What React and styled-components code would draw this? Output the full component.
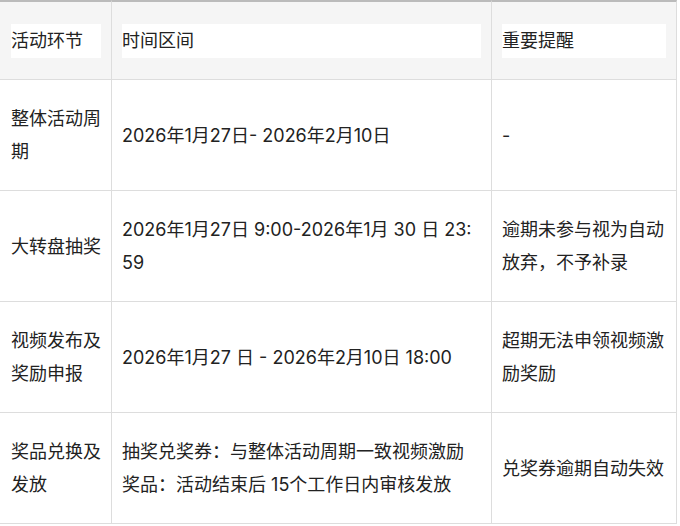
import React from "react";
import styled, { createGlobalStyle } from "styled-components";

const Global = createGlobalStyle`
  html, body { margin: 0; padding: 0; background: #fff; }
  body { font-family: Inter, "Noto Sans CJK SC", sans-serif; color: #222; }
`;

const Table = styled.table`
  border-collapse: separate;
  border-spacing: 0;
  table-layout: fixed;
  width: 677px;
  font-size: 18px;
  line-height: 33px;
`;

const HeadCell = styled.th`
  background: #f5f5f5;
  border-top: 2px solid #bbbbbb;
  border-right: 1px solid #dddddd;
  border-bottom: 1px solid #dddddd;
  padding: 22px 10px 21px ${(p) => (p.$first ? "11px" : "10px")};
  text-align: left;
  font-weight: normal;
  vertical-align: middle;
`;

const HeadLabel = styled.p`
  margin: 0;
  background: #fff;
  height: 34px;
  line-height: 34px;
`;

const Cell = styled.td`
  border-right: 1px solid #dddddd;
  border-bottom: 1px solid #dddddd;
  padding: 22px 10px 22px ${(p) => (p.$first ? "11px" : "10px")};
  height: 66px;
  vertical-align: middle;
  text-align: left;
  word-break: break-all;
`;

const columns = [
  { label: "活动环节", width: 112 },
  { label: "时间区间", width: 380 },
  { label: "重要提醒", width: 185 },
];

const rows = [
  ["整体活动周期", "2026年1月27日- 2026年2月10日", "-"],
  ["大转盘抽奖", "2026年1月27日 9:00-2026年1月 30 日 23:59", "逾期未参与视为自动放弃，不予补录"],
  ["视频发布及奖励申报", "2026年1月27 日 - 2026年2月10日 18:00", "超期无法申领视频激励奖励"],
  ["奖品兑换及发放", "抽奖兑奖券：与整体活动周期一致视频激励奖品：活动结束后 15个工作日内审核发放", "兑奖券逾期自动失效"],
];

export default function App() {
  return (
    <>
      <Global />
      <Table>
        <colgroup>
          {columns.map((c) => (
            <col key={c.label} style={{ width: c.width }} />
          ))}
        </colgroup>
        <thead>
          <tr>
            {columns.map((c, i) => (
              <HeadCell key={c.label} $first={i === 0}>
                <HeadLabel>{c.label}</HeadLabel>
              </HeadCell>
            ))}
          </tr>
        </thead>
        <tbody>
          {rows.map((r) => (
            <tr key={r[0]}>
              {r.map((t, i) => (
                <Cell key={i} $first={i === 0}>
                  {t}
                </Cell>
              ))}
            </tr>
          ))}
        </tbody>
      </Table>
    </>
  );
}
